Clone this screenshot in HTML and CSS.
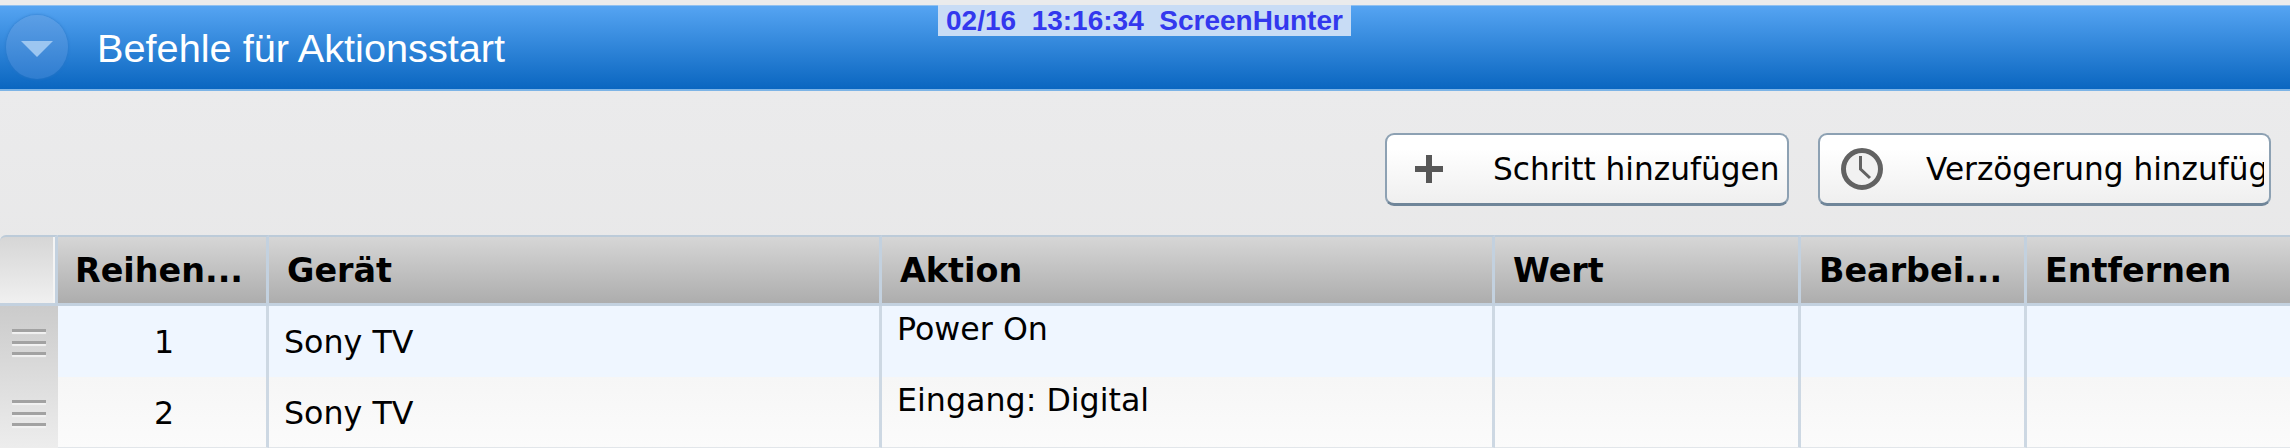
FILE: index.html
```html
<!DOCTYPE html>
<html lang="de">
<head>
<meta charset="utf-8">
<title>Befehle für Aktionsstart</title>
<link rel="stylesheet" href="styles.css">
</head>
<body>
<div class="stamp">02/16  13:16:34  ScreenHunter</div>
<header class="bar">
  <span class="toggle">
    <svg class="toggle-arrow" width="34" height="18" viewBox="0 0 34 18"><path d="M1 1H33L17 17Z" fill="#9cc6f1"/></svg>
  </span>
  <h1 class="title">Befehle für Aktionsstart</h1>
</header>
<section class="panel">
  <div class="toolbar">
    <button class="btn btn-step">
      <span class="btn-icon">
        <svg class="soft" width="32" height="32" viewBox="0 0 32 32"><path d="M16 2V30M2 16H30" stroke="#575757" stroke-width="6"/></svg>
      </span>
      <span class="btn-label">Schritt hinzufügen</span>
    </button>
    <button class="btn btn-delay">
      <span class="btn-icon">
        <svg class="soft" width="44" height="44" viewBox="0 0 44 44"><circle cx="22" cy="22" r="18.5" fill="#f1f1f1" stroke="#626262" stroke-width="5"/><path d="M20.5 9V22L30 31" fill="none" stroke="#626262" stroke-width="3"/></svg>
      </span>
      <span class="btn-label">Verzögerung hinzufügen</span>
    </button>
  </div>
  <table class="grid">
    <colgroup>
      <col class="c-grip"><col class="c-order"><col class="c-device"><col class="c-action"><col class="c-value"><col class="c-edit"><col class="c-remove">
    </colgroup>
    <thead>
      <tr>
        <th class="grip-head"></th>
        <th>Reihen...</th>
        <th class="th-shift">Gerät</th>
        <th class="th-shift">Aktion</th>
        <th class="th-shift">Wert</th>
        <th class="th-shift">Bearbei...</th>
        <th class="th-shift">Entfernen</th>
      </tr>
    </thead>
    <tbody>
      <tr class="row-a">
        <td class="grip" rowspan="2">
          <div class="grips">
            <span class="handle"><i></i><i></i><i></i></span>
            <span class="handle"><i></i><i></i><i></i></span>
          </div>
        </td>
        <td class="num">1</td>
        <td class="dev">Sony TV</td>
        <td class="act">Power On</td>
        <td></td><td></td><td></td>
      </tr>
      <tr class="row-b">
        <td class="num">2</td>
        <td class="dev">Sony TV</td>
        <td class="act">Eingang: Digital</td>
        <td></td><td></td><td></td>
      </tr>
    </tbody>
  </table>
</section>
</body>
</html>
```
FILE: styles.css
```css
* { box-sizing: border-box; }
html, body { margin: 0; padding: 0; }
body {
  width: 2290px;
  height: 448px;
  overflow: hidden;
  position: relative;
  background: #eaebec;
  padding-top: 5px;
  font-family: "DejaVu Sans", Verdana, sans-serif;
  color: #000;
}
.stamp {
  position: absolute;
  left: 938px;
  top: 5px;
  width: 413px;
  height: 31px;
  padding-left: 8px;
  background: #c8dcf5;
  color: #3338ee;
  font: bold 28px/31px "Liberation Sans", Arial, sans-serif;
  white-space: pre;
}
.bar {
  height: 86px;
  display: flex;
  align-items: center;
  background: linear-gradient(#55a4f2, #0a66c0);
  border-bottom: 2px solid #7db4e6;
  border-top: 1px solid #8fc0f0;
  padding-left: 6px;
}
.toggle {
  width: 62px;
  height: 64px;
  border-radius: 50%;
  display: flex;
  align-items: center;
  justify-content: center;
  background: linear-gradient(#5c9fe6, #2f7dd0);
  box-shadow: 0 0 3px #2a75c4;
  flex: none;
  margin-top: -2px;
}
.toggle-arrow { margin-top: 4px; }
.title {
  margin: 2px 0 0 29px;
  font: normal 39.7px/1 "Liberation Sans", Arial, sans-serif;
  color: #fff;
}
.panel {
  height: 357px;
  background: linear-gradient(#ebebec, #e5e5e5);
  border-top-left-radius: 6px;
  display: flex;
  flex-direction: column;
}
.toolbar {
  height: 144px;
  flex: none;
  display: flex;
  justify-content: flex-end;
  align-items: flex-start;
  gap: 29px;
  padding: 42px 19px 0 0;
}
.btn {
  height: 73px;
  display: flex;
  align-items: center;
  padding: 0 5px 0 0;
  overflow: hidden;
  background: linear-gradient(#ffffff 20%, #efefef);
  border: 2px solid #8da1b3;
  border-bottom: 3px solid #6f8599;
  border-radius: 9px;
  font: 31.2px/1 "DejaVu Sans", Verdana, sans-serif;
  color: #000;
  white-space: nowrap;
}
.btn-step { width: 404px; }
.btn-delay { width: 453px; }
.btn-icon {
  flex: none;
  width: 84px;
  margin-right: 22px;
  display: flex;
  justify-content: center;
  align-items: center;
}
.soft { filter: blur(0.7px); }
.btn-label {
  flex: 1;
  min-width: 0;
  overflow: hidden;
  text-align: left;
  line-height: 44px;
}
.grid {
  width: 2290px;
  table-layout: fixed;
  border-collapse: separate;
  border-spacing: 0;
}
.c-grip { width: 58px; }
.c-order { width: 211px; }
.c-device { width: 613px; }
.c-action { width: 613px; }
.c-value { width: 306px; }
.c-edit { width: 226px; }
.c-remove { width: 263px; }
.grid th {
  height: 71px;
  padding: 2px 0 0 17px;
  text-align: left;
  font: bold 33.4px/1 "DejaVu Sans", Verdana, sans-serif;
  background: linear-gradient(#d6d6d6, #adadad);
  border-top: 2px solid #bccbd9;
  border-bottom: 3px solid #c3d1df;
  border-right: 3px solid #c3d1df;
  white-space: nowrap;
  overflow: hidden;
}
.grid th.th-shift { padding-left: 18px; }
.grid th:last-child, .grid td:last-child { border-right: 0; }
.grid th.grip-head {
  background: linear-gradient(#d6d6d6, #f0f0f0);
  border-top-left-radius: 6px;
  box-shadow: inset -2px 0 0 #f4f4f4;
}
.grid td {
  padding: 0 0 0 16px;
  border-right: 3px solid #cdd8e3;
  font-size: 31.7px;
  line-height: 1;
  vertical-align: middle;
}
.row-a td { height: 71px; background: #eff6ff; }
.row-b td {
  height: 71px;
  background: linear-gradient(#f6f6f6, #fbfbfb);
  border-bottom: 1px solid #e2e6ea;
}
.grid td.grip {
  padding: 0;
  vertical-align: top;
  background: linear-gradient(#cbcbcb, #ededed);
  border-right: 0;
}
.grips {
  display: flex;
  flex-direction: column;
  align-items: flex-start;
  gap: 45px;
  padding: 23px 0 0 12px;
  filter: blur(0.6px);
}
.handle { display: flex; flex-direction: column; gap: 8.5px; }
.handle i {
  display: block;
  width: 34px;
  height: 3px;
  background: #a2a2a2;
  box-shadow: 0 2px 1px #f2f2f2;
}
.grid td.num { padding: 3px 0 0 4px; text-align: center; }
.grid td.dev { padding: 3px 0 0 15px; }
.grid td.act { padding: 8px 0 0 15px; vertical-align: top; }
```
